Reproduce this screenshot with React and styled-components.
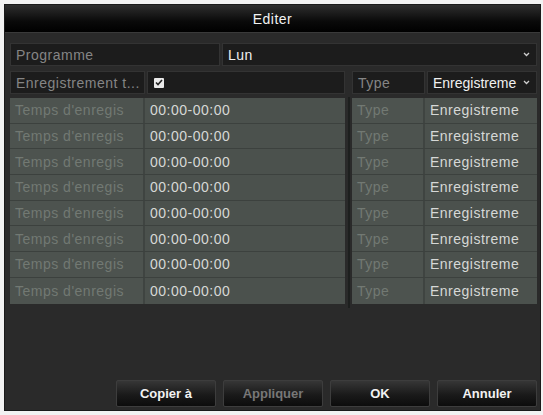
import styled, { createGlobalStyle } from "styled-components";

const Global = createGlobalStyle`
  html, body {
    margin: 0;
    padding: 0;
    background: #f2f2f2;
  }
  body {
    font-family: "Liberation Sans", Arial, sans-serif;
  }
`;

const rows = Array.from({ length: 8 }, () => ({
  label: "Temps d'enregis",
  time: "00:00-00:00",
  type: "Type",
  value: "Enregistreme",
}));

function Arrow() {
  return (
    <svg width="7" height="5" viewBox="0 0 7 5">
      <path d="M1 1 L3.5 3.5 L6 1" fill="none" stroke="#cfcfcf" strokeWidth="1.3" />
    </svg>
  );
}

export default function App() {
  return (
    <>
      <Global />
      <Window>
        <TitleBar>Editer</TitleBar>
        <Body>
          <FieldRow>
            <Cell $w="210px" $dim>Programme</Cell>
            <Cell $grow>
              Lun
              <Spacer />
              <Arrow />
            </Cell>
          </FieldRow>
          <Columns>
            <Block>
              <FieldRow>
                <Cell $w="135px" $dim>Enregistrement t...</Cell>
                <Cell $grow>
                  <Check>
                    <svg width="8" height="7" viewBox="0 0 8 7">
                      <path d="M1 3.5 L3 5.5 L7 1" fill="none" stroke="#222" strokeWidth="1.6" />
                    </svg>
                  </Check>
                </Cell>
              </FieldRow>
              <Table>
                {rows.map((r, i) => (
                  <DataRow key={i} $last={i === rows.length - 1}>
                    <DataCell $w="135px" $muted>{r.label}</DataCell>
                    <DataCell $grow>{r.time}</DataCell>
                  </DataRow>
                ))}
              </Table>
            </Block>
            <Divider />
            <Block $w="185px">
              <FieldRow>
                <Cell $w="73px" $dim>Type</Cell>
                <Cell $grow $tight>
                  Enregistreme
                  <Spacer />
                  <Arrow />
                </Cell>
              </FieldRow>
              <Table>
                {rows.map((r, i) => (
                  <DataRow key={i} $last={i === rows.length - 1}>
                    <DataCell $w="73px" $muted>{r.type}</DataCell>
                    <DataCell $grow>{r.value}</DataCell>
                  </DataRow>
                ))}
              </Table>
            </Block>
          </Columns>
          <Footer>
            <Button>Copier à</Button>
            <Button $disabled>Appliquer</Button>
            <Button>OK</Button>
            <Button>Annuler</Button>
          </Footer>
        </Body>
      </Window>
    </>
  );
}

const Window = styled.div`
  margin: 4px 0 0 4px;
  width: 537px;
  height: 407px;
  background: #2a2a2a;
  display: flex;
  flex-direction: column;
  box-sizing: border-box;
  border: 1px solid #1a1a1a;
`;

const TitleBar = styled.div`
  height: 27px;
  flex-shrink: 0;
  background: linear-gradient(#2e2e2e, #0a0a0a 60%, #000);
  color: #f2f2f2;
  font-size: 14px;
  letter-spacing: 0.5px;
  display: flex;
  align-items: center;
  justify-content: center;
  border-bottom: 1px solid #3a3a3a;
`;

const Body = styled.div`
  flex: 1;
  display: flex;
  flex-direction: column;
  padding: 10px 3px 3px 5px;
`;

const FieldRow = styled.div`
  display: flex;
  gap: 2px;
  height: 23px;
  margin-bottom: 5px;
`;

const Cell = styled.div`
  width: ${(p) => p.$w || "auto"};
  flex: ${(p) => (p.$grow ? 1 : "none")};
  display: flex;
  align-items: center;
  padding: 0 6px 0 5px;
  background: #1c1c1c;
  border: 1px solid #333;
  box-sizing: border-box;
  font-size: 14px;
  letter-spacing: ${(p) => (p.$tight ? "0" : "0.5px")};
  color: ${(p) => (p.$dim ? "#858585" : "#f0f0f0")};
  white-space: nowrap;
  overflow: hidden;
`;

const Spacer = styled.span`
  flex: 1;
`;

const Check = styled.span`
  width: 10px;
  height: 10px;
  background: #eaeaea;
  border-radius: 1px;
  display: flex;
  align-items: center;
  justify-content: center;
  margin-left: 1px;
`;

const Columns = styled.div`
  display: flex;
  align-items: stretch;
`;

const Block = styled.div`
  width: ${(p) => p.$w || "auto"};
  flex: ${(p) => (p.$w ? "none" : 1)};
  display: flex;
  flex-direction: column;
`;

const Divider = styled.div`
  width: 7px;
  margin-top: 26px;
  margin-bottom: -4px;
  display: flex;
  justify-content: center;
  &::before {
    content: "";
    width: 2px;
    background: #1d1f1e;
  }
`;

const Table = styled.div`
  display: flex;
  flex-direction: column;
  background: #4a504c;
  border-radius: 0 0 3px 3px;
  margin-top: -1px;
`;

const DataRow = styled.div`
  display: flex;
  height: 25.7px;
  border-bottom: ${(p) => (p.$last ? "none" : "1px solid #3c413e")};
  box-sizing: border-box;
`;

const DataCell = styled.div`
  width: ${(p) => p.$w || "auto"};
  flex: ${(p) => (p.$grow ? 1 : "none")};
  display: flex;
  align-items: center;
  padding: 0 5px;
  box-sizing: border-box;
  font-size: 14px;
  letter-spacing: 0.5px;
  white-space: nowrap;
  overflow: hidden;
  color: ${(p) => (p.$muted ? "#727973" : "#d6d8d6")};
  background: ${(p) => (p.$muted ? "#4d534f" : "#4b514d")};
  border-right: ${(p) => (p.$muted ? "2px solid #3f4441" : "none")};
`;

const Footer = styled.div`
  margin-top: auto;
  display: flex;
  justify-content: flex-end;
  gap: 7px;
`;

const Button = styled.button`
  width: 100px;
  height: 27px;
  background: linear-gradient(#363636, #1a1a1a 55%, #0c0c0c);
  border: 1px solid #3d3d3d;
  border-radius: 2px;
  color: ${(p) => (p.$disabled ? "#777" : "#f2f2f2")};
  font-family: "Liberation Sans", Arial, sans-serif;
  font-size: 13px;
  font-weight: bold;
  padding: 0;
`;
